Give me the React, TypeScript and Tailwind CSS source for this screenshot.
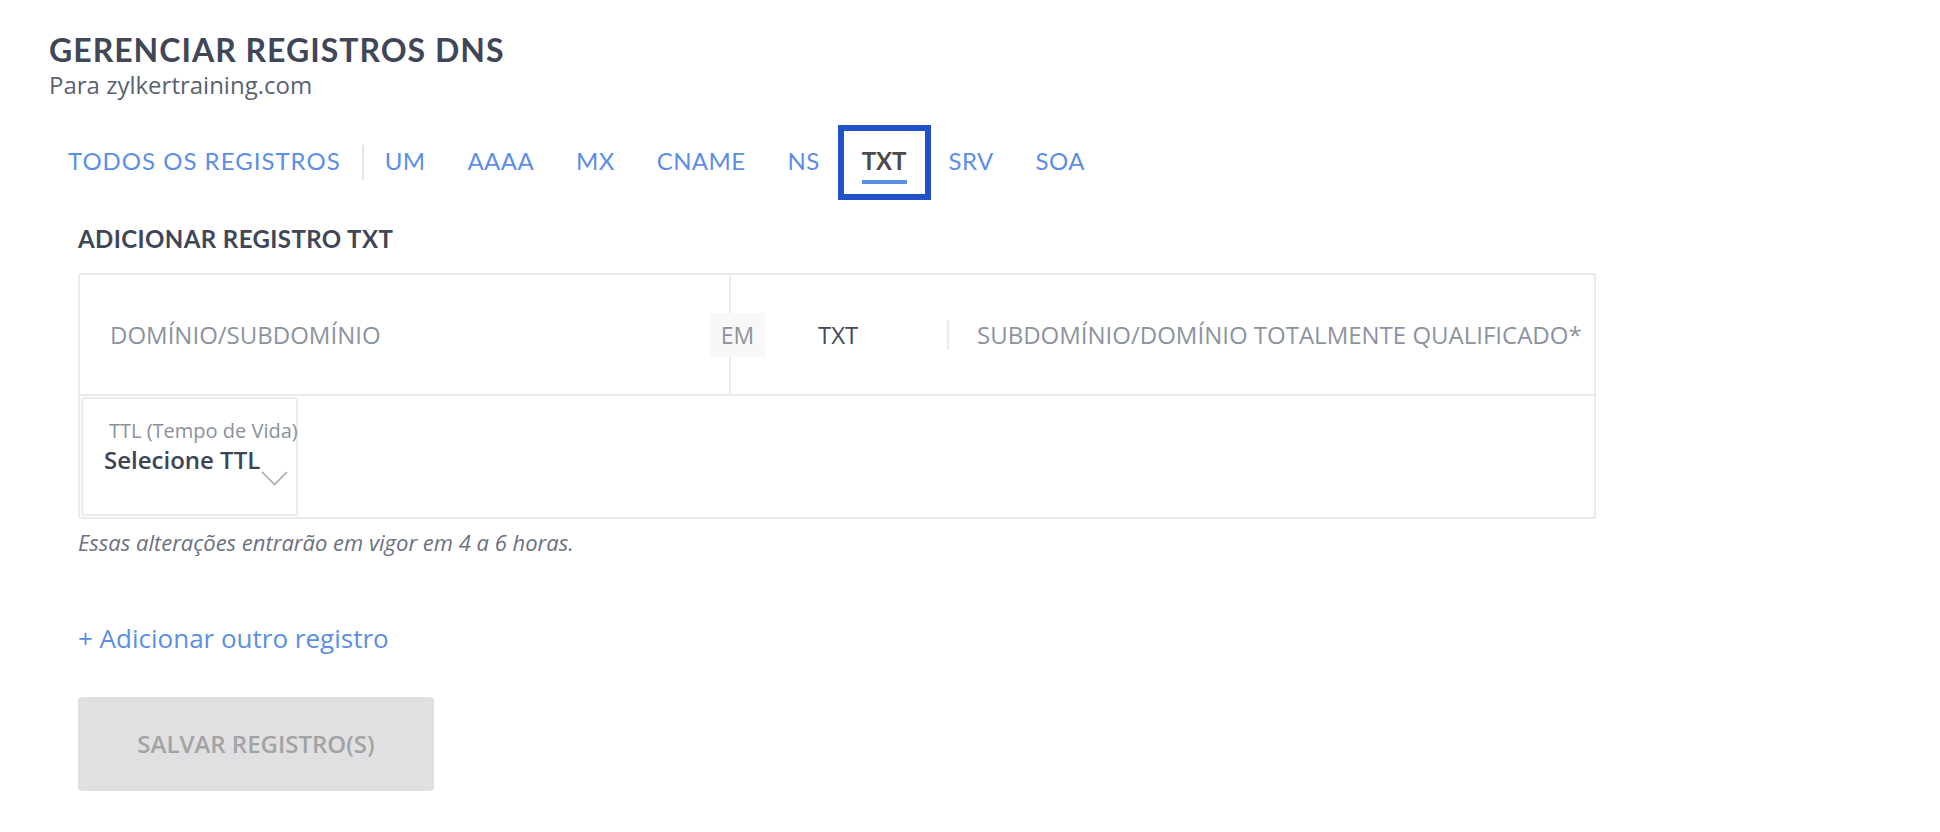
import React from 'react';

const TABS = ['UM', 'AAAA', 'MX', 'CNAME', 'NS', 'TXT', 'SRV', 'SOA'];
const ACTIVE = 'TXT';

const LATO = "font-['Lato',sans-serif]";
const OPEN = "font-['Open_Sans',sans-serif]";

function Tab({ label, active, wide }: { label: string; active?: boolean; wide?: boolean }) {
  return (
    <button
      className={`flex h-[69px] flex-col items-center px-[21px] pt-[19px] pb-[13px] ${LATO} text-[24px] leading-[28px] ${
        active
          ? 'text-[#4b4b4b] font-bold outline-6 outline-solid outline-[#2152c9] outline-offset-[-3px]'
          : wide
            ? 'text-[#5b8ee6] tracking-[1px]'
            : 'text-[#5b8ee6] tracking-[0.4px]'
      }`}
    >
      <span>{label}</span>
      <span className={`mt-[5px] h-[4px] w-full ${active ? 'bg-[#5b8ee6]' : 'bg-transparent'}`} />
    </button>
  );
}

export default function App() {
  return (
    <div className="min-h-screen bg-white pl-[49px] pt-[31px]">
      <h1 className={`${LATO} text-[32px] leading-[37px] font-bold tracking-[1px] text-[#3f4658]`}>
        GERENCIAR REGISTROS DNS
      </h1>
      <p className={`${OPEN} mt-[1px] text-[24px] leading-[32px] text-[#5b6270]`}>Para zylkertraining.com</p>

      <nav className="mt-[27px] -ml-[2px] flex items-center">
        <Tab label="TODOS OS REGISTROS" wide />
        <span className="h-[35px] w-[2px] bg-[#e6e6e6]" />
        {TABS.map((t) => (
          <Tab key={t} label={t} active={t === ACTIVE} />
        ))}
      </nav>

      <div className="ml-[29px]">
        <h2 className={`${LATO} mt-[28px] text-[24px] leading-[28px] font-bold tracking-[0.4px] text-[#3f4658]`}>
          ADICIONAR REGISTRO TXT
        </h2>

        <div className="mt-[20px] w-[1518px] rounded-[3px] border-2 border-[#ebebeb]">
          <div className="relative flex h-[121px] border-b-2 border-[#ebebeb]">
            <div className="flex w-[651px] items-center border-r-2 border-[#ebebeb] pl-[30px]">
              <span className={`${OPEN} text-[24px] text-[#8c93a0]`}>DOMÍNIO/SUBDOMÍNIO</span>
            </div>
            <div className="flex flex-1 items-center">
              <div className="w-[216px] pl-[87px]">
                <span className={`${OPEN} text-[24px] text-[#434a5a]`}>TXT</span>
              </div>
              <span className="h-[30px] w-[2px] bg-[#ececec]" />
              <span className={`${OPEN} ml-[28px] text-[24px] text-[#8c93a0]`}>
                SUBDOMÍNIO/DOMÍNIO TOTALMENTE QUALIFICADO*
              </span>
            </div>
            <div
              className={`absolute left-[630px] top-[38px] flex h-[44px] w-[55px] items-center justify-center bg-[#f8f8f9] ${OPEN} text-[23px] text-[#8c93a0]`}
            >
              EM
            </div>
          </div>

          <div className="flex h-[121px]">
            <div className="relative m-px h-[119px] w-[217px] rounded-[3px] border-2 border-[#ececec] pt-[18px]">
              <div className={`${OPEN} whitespace-nowrap pl-[26px] text-[20px] leading-[27px] text-[#8a909c]`}>
                TTL (Tempo de Vida)
              </div>
              <div className={`${OPEN} whitespace-nowrap pl-[21px] text-[24px] leading-[31px] font-semibold text-[#3d4455]`}>
                Selecione TTL
              </div>
              <svg
                className="absolute left-[178px] top-[72px]"
                width="27"
                height="15"
                viewBox="0 0 27 15"
                fill="none"
              >
                <polyline points="1,1 13.5,13.5 26,1" stroke="#a0a4ab" strokeWidth="1.5" />
              </svg>
            </div>
          </div>
        </div>

        <p className={`${OPEN} mt-[9px] text-[22px] leading-[28px] italic text-[#6b7180]`}>
          Essas alterações entrarão em vigor em 4 a 6 horas.
        </p>

        <button className={`${OPEN} mt-[65px] block text-[26px] leading-[35px] text-[#5b8ee6]`}>
          + Adicionar outro registro
        </button>

        <button
          className={`${OPEN} mt-[41px] flex h-[94px] w-[356px] items-center justify-center rounded-[4px] bg-[#e0e0e2] text-[24px] font-semibold text-[#a3a3a3]`}
        >
          SALVAR REGISTRO(S)
        </button>
      </div>
    </div>
  );
}
